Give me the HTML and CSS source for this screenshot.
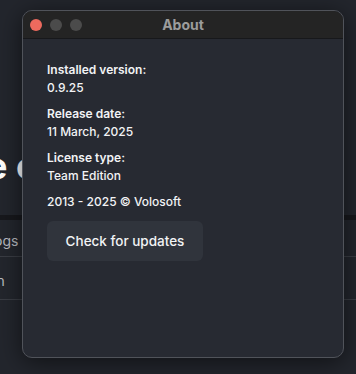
FILE: index.html
```html
<!DOCTYPE html>
<html>
<head>
<meta charset="utf-8">
<link rel="stylesheet" href="styles.css">
</head>
<body>
<div class="app">
  <h1 class="hero">e c</h1>
  <div class="tabbar"></div>
  <div class="row row-first">ogs</div>
  <div class="row">on</div>
</div>
<div class="window">
  <div class="titlebar">
    <div class="lights">
      <span class="light red"></span>
      <span class="light gray"></span>
      <span class="light gray"></span>
    </div>
    <div class="title">About</div>
  </div>
  <div class="content">
    <div class="field">
      <div class="label">Installed version:</div>
      <div class="value">0.9.25</div>
    </div>
    <div class="field">
      <div class="label">Release date:</div>
      <div class="value">11 March, 2025</div>
    </div>
    <div class="field">
      <div class="label">License type:</div>
      <div class="value">Team Edition</div>
    </div>
    <div class="copy">2013 - 2025 © Volosoft</div>
    <button class="btn">Check for updates</button>
  </div>
</div>
</body>
</html>
```

FILE: styles.css
```css
* { box-sizing: border-box; }
html, body { margin: 0; padding: 0; }
body {
  width: 356px;
  height: 374px;
  overflow: hidden;
  background: #23262d;
  font-family: Inter, "Open Sans", sans-serif;
  position: relative;
}
.app {
  padding-top: 144px;
  color: #e6e7ea;
}
.hero {
  margin: 0 0 0 -14px;
  font-size: 36px;
  font-weight: 700;
  line-height: 44px;
  height: 44px;
  color: #ffffff;
  white-space: nowrap;
}
.tabbar {
  margin-top: 27px;
  height: 5px;
  background: #17181c;
}
.row {
  height: 43px;
  border-bottom: 1px solid #3a3d44;
  font-size: 14px;
  line-height: 48px;
  color: #b9bbc0;
  margin-left: -12px;
  overflow: hidden;
}
.row-first {
  height: 37px;
  line-height: 41px;
  margin-left: -6px;
}
.window {
  position: absolute;
  left: 22px;
  top: 10px;
  width: 322px;
  height: 348px;
  background: #272a32;
  border: 1px solid #50535a;
  border-radius: 10px;
  overflow: hidden;
  box-shadow: 0 4px 24px rgba(0, 0, 0, 0.55);
}
.titlebar {
  height: 28px;
  background: #242424;
  border-bottom: 1px solid #17181b;
  display: flex;
  align-items: center;
  position: relative;
}
.lights {
  display: flex;
  gap: 8px;
  padding-left: 7px;
}
.light {
  width: 12px;
  height: 12px;
  border-radius: 50%;
  display: block;
}
.red { background: #ed6a5e; }
.gray { background: #4b4b4b; }
.title {
  position: absolute;
  left: 0;
  right: 0;
  top: 0;
  line-height: 27px;
  text-align: center;
  color: #9c9c9c;
  font-size: 14px;
  font-weight: 700;
  pointer-events: none;
}
.content {
  padding: 22px 0 0 24px;
  color: #f2f3f5;
  font-size: 12px;
  line-height: 18px;
}
.field { margin-bottom: 8px; }
.label { font-weight: 600; }
.value { font-weight: 500; }
.copy { font-weight: 500; }
.btn {
  margin-top: 10px;
  width: 156px;
  height: 40px;
  background: #30343c;
  border: none;
  border-radius: 6px;
  color: #f2f3f5;
  font-family: inherit;
  font-size: 13.5px;
  font-weight: 500;
  padding: 0;
}
```
